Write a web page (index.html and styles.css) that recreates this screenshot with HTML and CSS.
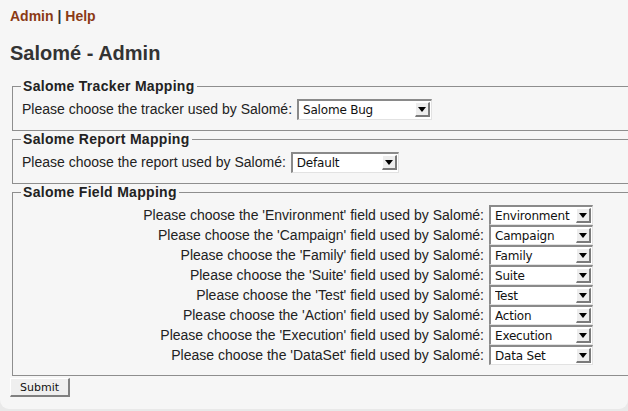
FILE: index.html
```html
<!DOCTYPE html>
<html lang="fr">
<head>
<meta charset="utf-8">
<title>Salomé - Admin</title>
<link rel="stylesheet" href="styles.css">
</head>
<body>
<div class="page">
  <div class="nav"><a href="#">Admin</a> | <a href="#">Help</a></div>
  <h1>Salomé - Admin</h1>
  <form class="form">
    <fieldset class="group">
      <legend>Salome Tracker Mapping</legend>
      <div class="row">
        <span class="label">Please choose the tracker used by Salomé:</span>
        <span class="select w-tracker"><span class="val">Salome Bug</span><span class="arrow"></span></span>
      </div>
    </fieldset>
    <fieldset class="group">
      <legend>Salome Report Mapping</legend>
      <div class="row">
        <span class="label">Please choose the report used by Salomé:</span>
        <span class="select w-report"><span class="val">Default</span><span class="arrow"></span></span>
      </div>
    </fieldset>
    <fieldset class="group">
      <legend>Salome Field Mapping</legend>
      <div class="fields">
        <span class="flabel">Please choose the 'Environment' field used by Salomé:</span>
        <span class="select w-field"><span class="val">Environment</span><span class="arrow"></span></span>
        <span class="flabel">Please choose the 'Campaign' field used by Salomé:</span>
        <span class="select w-field"><span class="val">Campaign</span><span class="arrow"></span></span>
        <span class="flabel">Please choose the 'Family' field used by Salomé:</span>
        <span class="select w-field"><span class="val">Family</span><span class="arrow"></span></span>
        <span class="flabel">Please choose the 'Suite' field used by Salomé:</span>
        <span class="select w-field"><span class="val">Suite</span><span class="arrow"></span></span>
        <span class="flabel">Please choose the 'Test' field used by Salomé:</span>
        <span class="select w-field"><span class="val">Test</span><span class="arrow"></span></span>
        <span class="flabel">Please choose the 'Action' field used by Salomé:</span>
        <span class="select w-field"><span class="val">Action</span><span class="arrow"></span></span>
        <span class="flabel">Please choose the 'Execution' field used by Salomé:</span>
        <span class="select w-field"><span class="val">Execution</span><span class="arrow"></span></span>
        <span class="flabel">Please choose the 'DataSet' field used by Salomé:</span>
        <span class="select w-field"><span class="val">Data Set</span><span class="arrow"></span></span>
      </div>
    </fieldset>
    <button type="button" class="submit">Submit</button>
  </form>
</div>
</body>
</html>
```

FILE: styles.css
```css
html, body {
  margin: 0;
  padding: 0;
}
body {
  background: #e9e9e9;
  font-family: "Liberation Sans", Arial, sans-serif;
  color: #222;
  overflow: hidden;
}
.page {
  box-sizing: border-box;
  width: 628px;
  height: 409px;
  background: #f6f6f6;
  border-radius: 0 0 9px 9px;
  padding: 8px 0 0 10px;
  overflow: hidden;
}
.nav {
  font-size: 14px;
  font-weight: bold;
  line-height: 17px;
  color: #333;
}
.nav a {
  color: #8b3a15;
  text-decoration: none;
}
h1 {
  margin: 16px 0 0 0;
  font-size: 20px;
  line-height: 24px;
  font-weight: bold;
  color: #333;
}
.form {
  margin-top: 13px;
  width: 660px;
}
.group {
  margin: 0 0 0 2px;
  padding: 4px 9px 10px 9px;
  border: 1px solid #8e8e8e;
  min-width: 0;
}
legend {
  padding: 0 2px;
  margin-left: -1px;
  font-size: 14px;
  font-weight: bold;
  line-height: 16px;
  letter-spacing: 0.3px;
  color: #222;
}
.row {
  display: flex;
  align-items: center;
  gap: 5px;
  height: 22px;
  font-size: 14px;
  color: #222;
}
.select {
  box-sizing: border-box;
  display: inline-flex;
  align-items: center;
  height: 21px;
  background: #fff;
  border-top: 2px solid #8a8a8a;
  border-left: 2px solid #8a8a8a;
  border-right: 1px solid #e2e2e2;
  border-bottom: 1px solid #e2e2e2;
  font-family: "DejaVu Sans", sans-serif;
  font-size: 12px;
  letter-spacing: -0.2px;
  color: #111;
  padding-left: 4px;
}
.select .val {
  flex: 1;
  white-space: nowrap;
  overflow: hidden;
}
.arrow {
  box-sizing: border-box;
  flex: none;
  width: 15px;
  height: 15px;
  margin-right: 1px;
  background: #ededed;
  border-top: 1px solid #fff;
  border-left: 1px solid #fff;
  border-right: 2px solid #7a7a7a;
  border-bottom: 2px solid #7a7a7a;
  position: relative;
}
.arrow::after {
  content: "";
  position: absolute;
  left: 2px;
  top: 4px;
  border-left: 4px solid transparent;
  border-right: 4px solid transparent;
  border-top: 5px solid #000;
}
.w-tracker { width: 135px; }
.w-report { width: 108px; }
.w-field { width: 104px; height: 20px; }
.fields {
  display: grid;
  grid-template-columns: 462px auto;
  column-gap: 5px;
  grid-auto-rows: 20px;
  align-items: center;
  justify-content: start;
  padding-top: 1px;
  font-size: 14px;
  color: #222;
}
.flabel {
  text-align: right;
  white-space: nowrap;
}
.submit {
  margin: 2px 0 0 0;
  padding: 0 9px;
  height: 19px;
  font-family: "DejaVu Sans", sans-serif;
  font-size: 11px;
  color: #111;
  background: #efefef;
  border-top: 1px solid #fff;
  border-left: 1px solid #fff;
  border-right: 2px solid #808080;
  border-bottom: 2px solid #808080;
  border-radius: 0;
}
```
